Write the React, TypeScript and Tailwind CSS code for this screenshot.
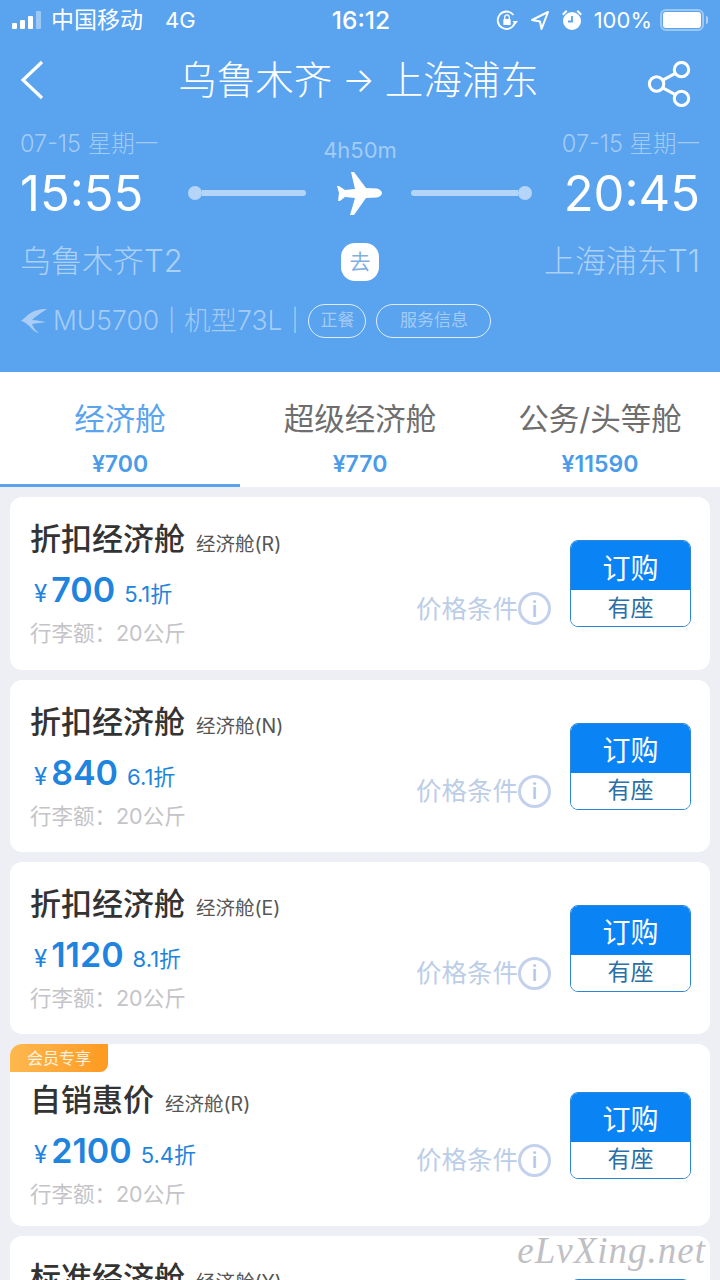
const fares = [
  { name: '折扣经济舱', cabin: '经济舱(R)', price: '700', discount: '5.1折' },
  { name: '折扣经济舱', cabin: '经济舱(N)', price: '840', discount: '6.1折' },
  { name: '折扣经济舱', cabin: '经济舱(E)', price: '1120', discount: '8.1折' },
  { name: '自销惠价', cabin: '经济舱(R)', price: '2100', discount: '5.4折', member: true },
  { name: '标准经济舱', cabin: '经济舱(Y)', price: '3170', discount: '7.7折' },
];

function Plane() {
  return (
    <svg width="46" height="46" viewBox="0 0 46 46" fill="white">
      <path d="M15 2 L18 2 L30 18 L41 18.5 C44 19 46 21.5 46 23 C46 24.5 44 27 41 27.5 L30 28 L18 45 L14 45 L19 28 L9 27 L4 31 L2 31 L3 23 L1 16 L3 16 L9 20 L19 19 Z" />
    </svg>
  );
}

function Share() {
  return (
    <svg className="mt-[8px]" width="46" height="46" viewBox="0 0 48 48" fill="none" stroke="white" strokeWidth="3.2">
      <circle cx="10" cy="24" r="7.5" />
      <circle cx="36" cy="9" r="7.5" />
      <circle cx="36" cy="39" r="7.5" />
      <path d="M16.5 20 L29.5 13 M16.5 28 L29.5 35" />
    </svg>
  );
}

function StatusBar() {
  return (
    <div className="flex h-10 items-center justify-between pr-3 pl-3 text-[23px] text-white">
      <div className="flex w-[240px] items-center">
        <div className="flex items-end gap-[3px]">
          <span className="h-[6px] w-[5px] rounded-[1px] bg-white" />
          <span className="h-[9px] w-[5px] rounded-[1px] bg-white" />
          <span className="h-[13px] w-[5px] rounded-[1px] bg-white" />
          <span className="h-[18px] w-[5px] rounded-[1px] bg-white/40" />
        </div>
        <span className="ml-[10px]">中国移动</span>
        <span className="ml-[22px] text-[22px]">4G</span>
      </div>
      <div className="ml-[-18px] text-[24.5px] font-medium">16:12</div>
      <div className="flex w-[220px] items-center justify-end text-[22px]">
        <svg width="22" height="24" viewBox="0 0 24 24" fill="none" stroke="white" strokeWidth="2">
          <path d="M20.5 15 A9.5 9.5 0 1 1 19 6.5" />
          <path d="M18 13 L24 13 L21 17 Z" fill="white" stroke="none" />
          <rect x="8" y="11" width="8" height="6.5" rx="1" fill="white" stroke="none" />
          <path d="M9.5 11 V9 A2.5 2.5 0 0 1 14.5 9 V11" strokeWidth="1.4" />
        </svg>
        <svg className="ml-[12px]" width="20" height="22" viewBox="0 0 20 22" fill="none" stroke="white" strokeWidth="2">
          <path d="M18 3 L2 11 L10 12.5 L11.5 20 Z" strokeLinejoin="round" />
        </svg>
        <svg className="ml-[11px]" width="22" height="24" viewBox="0 0 22 24" fill="white">
          <circle cx="11" cy="13" r="9" />
          <path d="M11 8 V13.5 H7" fill="none" stroke="#5aa3ef" strokeWidth="1.8" />
          <path d="M1 6 L5 2 L6.5 3.5 L2.5 7.5 Z M21 6 L17 2 L15.5 3.5 L19.5 7.5 Z" />
        </svg>
        <span className="ml-[11px]">100%</span>
        <div className="ml-[8px] flex h-[22px] w-[44px] items-center rounded-[6px] border-2 border-white/40 p-[1px]">
          <div className="h-full w-full rounded-[3px] bg-white" />
        </div>
        <div className="ml-[2px] h-[8px] w-[2px] rounded-r-sm bg-white/50" />
      </div>
    </div>
  );
}

function FlightHeader() {
  return (
    <div className="h-[372px] bg-[#5aa3ef]">
      <StatusBar />
      <div className="flex h-[80px] items-center justify-between pr-[27px] pl-5 text-white">
        <svg width="24" height="40" viewBox="0 0 24 40" fill="none" stroke="white" strokeWidth="3.2">
          <path d="M22 2 L3 20 L22 38" />
        </svg>
        <div className="ml-[26px] flex items-center text-[38.5px] leading-none font-light">
          <span>乌鲁木齐</span>
          <span className="mx-[10px] text-[34px]">→</span>
          <span>上海浦东</span>
        </div>
        <Share />
      </div>

      <div className="flex justify-between px-5 pt-[11px]">
        <div className="w-[170px]">
          <div className="text-[23.5px] leading-[26px] font-light whitespace-nowrap text-white/45">07-15 星期一</div>
          <div className="mt-[9px] text-[49px] leading-[56px] text-white">15:55</div>
          <div className="mt-[17px] text-[31px] leading-[44px] font-light whitespace-nowrap text-white/50">乌鲁木齐T2</div>
        </div>

        <div className="flex flex-1 flex-col items-center">
          <div className="mt-[6px] text-[22px] leading-[26px] text-white/45">4h50m</div>
          <div className="mt-[4px] flex h-[52px] w-[344px] items-center justify-between">
            <div className="flex items-center">
              <span className="h-[14px] w-[14px] rounded-full bg-[#b5d5f8]" />
              <span className="h-[6px] w-[104px] rounded-r-full bg-[#b5d5f8]" />
            </div>
            <Plane />
            <div className="flex items-center">
              <span className="h-[6px] w-[107px] rounded-l-full bg-[#b5d5f8]" />
              <span className="h-[14px] w-[14px] rounded-full bg-[#b5d5f8]" />
            </div>
          </div>
          <div className="mt-[24px] flex h-[38px] w-[38px] items-center justify-center rounded-[14px] bg-white text-[21px] text-[#7fb0e2]">去</div>
        </div>

        <div className="flex w-[170px] flex-col items-end">
          <div className="text-[23.5px] leading-[26px] font-light whitespace-nowrap text-white/45">07-15 星期一</div>
          <div className="mt-[9px] text-[49px] leading-[56px] text-white">20:45</div>
          <div className="mt-[17px] text-[31px] leading-[44px] font-light whitespace-nowrap text-white/50">上海浦东T1</div>
        </div>
      </div>

      <div className="mt-[18px] flex items-center pl-5 text-[26.5px] font-light text-white/45">
        <svg width="28" height="26" viewBox="0 0 28 26" fill="#a9cdf5">
          <path d="M27 1 C19 1 13 3 9 6 L1 13 C5 14 9 17 12 21 C14 23 17 25 19 25 C16 23 13 19 12 16 C16 15 22 15 26 14 C21 13 15 12 12 12 C16 8 22 4 27 1 Z" />
        </svg>
        <span className="ml-[5px]">MU5700</span>
        <span className="ml-[9px] text-[22px]">|</span>
        <span className="ml-[9px]">机型73L</span>
        <span className="ml-[9px] text-[22px]">|</span>
        <span className="ml-[10px] flex h-[34px] w-[58px] items-center justify-center rounded-full border border-white/80 text-[17px] font-normal">正餐</span>
        <span className="ml-[10px] flex h-[34px] w-[115px] items-center justify-center rounded-full border border-white/80 text-[17px] font-normal">服务信息</span>
      </div>
    </div>
  );
}

function Tabs() {
  const tabs = [
    { label: '经济舱', price: '¥700', active: true },
    { label: '超级经济舱', price: '¥770' },
    { label: '公务/头等舱', price: '¥11590' },
  ];
  return (
    <div className="grid h-[115px] grid-cols-3 bg-white">
      {tabs.map((t) => (
        <div key={t.label} className={`flex flex-col items-center pt-[25px] ${t.active ? 'border-b-[3px] border-[#5aa3ef]' : ''}`}>
          <div className={`text-[30.5px] leading-[44px] ${t.active ? 'text-[#5aa3ef]' : 'text-[#6e6e6e]'}`}>{t.label}</div>
          <div className="mt-[10px] text-[23px] leading-[26px] font-semibold text-[#4a9be8]">{t.price}</div>
        </div>
      ))}
    </div>
  );
}

function FareCard({ fare }: { fare: (typeof fares)[number] }) {
  return (
    <div className={`relative flex shrink-0 items-center justify-between rounded-[12px] bg-white pr-[19px] pl-5 ${fare.member ? 'h-[182px]' : 'h-[172px] first:h-[173px]'}`}>
      {fare.member && (
        <div className="absolute top-0 left-0 flex h-[28px] w-[98px] items-center justify-center rounded-tl-[12px] rounded-br-[8px] bg-gradient-to-r from-[#fdb84e] to-[#fe9a1e] text-[16px] text-white/85">
          会员专享
        </div>
      )}
      <div className={`mb-[2px] ${fare.member ? 'pt-[18px]' : ''}`}>
        <div className="flex items-center">
          <span className="text-[31px] leading-[42px] font-medium text-[#333]">{fare.name}</span>
          <span className="mt-[11px] ml-[11px] text-[19.5px] text-[#555]">{fare.cabin}</span>
        </div>
        <div className="mt-[9px] flex items-baseline pl-[4px] text-[#1f84de]">
          <span className="text-[24px]">¥</span>
          <span className="ml-[4px] text-[34px] leading-[42px] font-semibold">{fare.price}</span>
          <span className="ml-[9px] text-[22px]">{fare.discount}</span>
        </div>
        <div className="mt-[7px] text-[21.5px] leading-[28px] text-[#c4c4c8]">行李额：20公斤</div>
      </div>
      <div className="flex items-end">
        <div className="mr-[19px] mb-[-1px] flex items-center text-[25.5px] text-[#bccde8]">
          <span>价格条件</span>
          <span className="flex h-[33px] w-[33px] items-center justify-center rounded-full border-[3px] border-[#c3d1ec] text-[22px] leading-none font-medium text-[#b4c6e6]">i</span>
        </div>
        <div className="w-[121px] overflow-hidden rounded-[8px] border border-[#2b86d8]">
          <div className="flex h-[49px] items-center justify-center bg-[#0a84f5] pt-[6px] text-[28px] text-white">订购</div>
          <div className="flex h-[36px] items-center justify-center bg-white text-[23px] text-[#2a6fa8]">有座</div>
        </div>
      </div>
    </div>
  );
}

export default function App() {
  return (
    <div className="relative h-[1280px] w-[720px] overflow-hidden bg-[#eeeef5] font-['Inter','Noto_Sans_CJK_SC',sans-serif]">
      <FlightHeader />
      <Tabs />
      <div className="flex flex-col gap-[10px] px-[10px] pt-[10px]">
        {fares.map((f, i) => (
          <FareCard key={i} fare={f} />
        ))}
      </div>
      <div className="absolute top-[1229px] right-[14px] font-['Liberation_Serif',serif] text-[37px] leading-[44px] tracking-[1px] text-[#c0c0c4] italic">eLvXing.net</div>
    </div>
  );
}
